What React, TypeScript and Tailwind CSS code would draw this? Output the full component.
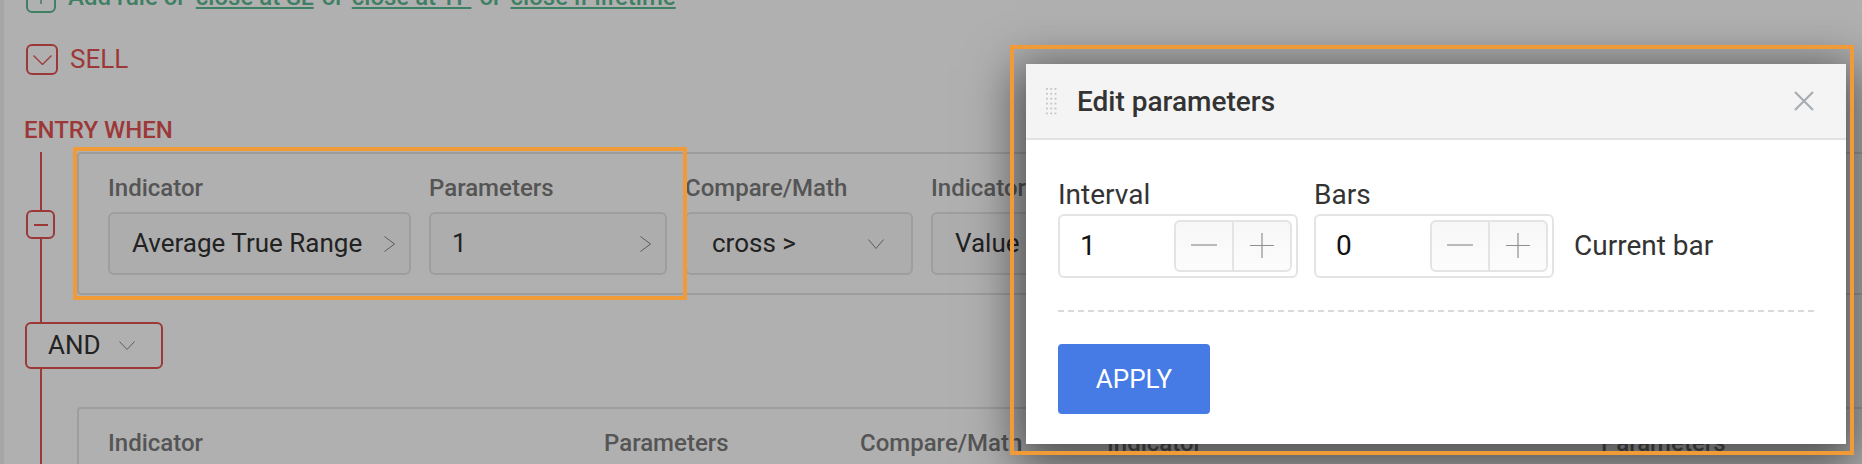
import React from "react";

const ChevronRight = () => (
  <svg width="11" height="16" viewBox="0 0 11 16" fill="none" stroke="#5c5c5c" strokeWidth="1" className="shrink-0">
    <path d="M0.5 0.5 L10.5 8 L0.5 15.5" />
  </svg>
);

const ChevronDown = ({ w = 16, h = 10, color = "#5c5c5c", sw = 1, className }: { w?: number; h?: number; color?: string; sw?: number; className?: string }) => (
  <svg width={w} height={h} viewBox={`0 0 ${w} ${h}`} fill="none" stroke={color} strokeWidth={sw} className={className}>
    <path d={`M0.5 0.5 L${w / 2} ${h - 0.5} L${w - 0.5} 0.5`} />
  </svg>
);

const Field = ({ w, text, icon, pl, pr = "pr-[14px]" }: { w: string; text: string; icon?: React.ReactNode; pl: string; pr?: string }) => (
  <div className={`${w} h-[63px] shrink-0 rounded-md border-2 border-[#9e9e9e] flex items-center justify-between ${pl} ${pr} text-[26px] text-[#222] bg-[#adadad]`}>
    <span className="whitespace-nowrap">{text}</span>
    {icon}
  </div>
);

const Label = ({ w, children }: { w: string; children: React.ReactNode }) => (
  <div className={`${w} shrink-0 text-[24px] font-medium text-[#555] leading-[26px] whitespace-nowrap`}>{children}</div>
);

const Stepper = ({ value }: { value: string }) => (
  <div className="w-[240px] h-[64px] rounded-md border-2 border-[#e4e4e4] flex items-center justify-between pl-[20px] pr-[4px]">
    <span className="text-[28px] text-[#111] leading-none">{value}</span>
    <div className="w-[118px] h-[52px] rounded-md border-2 border-[#e4e4e4] bg-gradient-to-b from-[#f7f7f7] to-[#fcfcfc] flex">
      <div className="flex-1 flex items-center justify-center border-r-2 border-[#e4e4e4]">
        <svg width="28" height="28" viewBox="0 0 28 28" stroke="#8f8f8f" strokeWidth="1.2"><path d="M1 13 H27" /></svg>
      </div>
      <div className="w-[56px] flex items-center justify-center">
        <svg width="26" height="26" viewBox="0 0 26 26" stroke="#8f8f8f" strokeWidth="1.2"><path d="M1 12.5 H25 M13 0 V25" /></svg>
      </div>
    </div>
  </div>
);

export default function App() {
  return (
    <div className="relative w-[1862px] h-[464px] overflow-hidden bg-[#b0b0b0] font-['Roboto',sans-serif]">
      <div className="flex flex-col h-[500px] border-l-[4px] border-[#a6a6a6] pl-[22px] -mt-[19px]">
        <div className="flex items-center gap-[12px] h-[32px]">
          <div className="w-[30px] h-[32px] rounded-md border-2 border-[#3f7f63] flex items-center justify-center text-[#3f7f63]">
            <svg width="14" height="14" viewBox="0 0 14 14" stroke="currentColor" strokeWidth="1.5"><path d="M0 7 H14 M7 0 V14" /></svg>
          </div>
          <div className="text-[24px] text-[#3f7f63] font-medium whitespace-nowrap flex gap-[8px]">
            <span>Add rule or</span>
            <span className="underline ml-[2px]">close at SL</span>
            <span>or</span>
            <span className="underline">close at TP</span>
            <span>or</span>
            <span className="underline ml-[1px]">close if lifetime</span>
          </div>
        </div>
        <div className="flex items-center gap-[12px] mt-[31px] h-[31px]">
          <div className="w-[32px] h-[31px] rounded-md border-2 border-[#9c3838] flex items-center justify-center">
            <ChevronDown w={19} h={10} color="#9c3838" sw={1.3} />
          </div>
          <span className="text-[26px] text-[#9c3838]">SELL</span>
        </div>
        <div className="mt-[41px] h-[29px] -ml-[2px] text-[24px] font-medium text-[#9c3838] leading-[29px]">ENTRY WHEN</div>
        <div className="relative flex flex-col">
          <div className="absolute left-[14px] top-[7px] bottom-[-200px] w-[2px] bg-[#9c3838]" />
          <div className="ml-[51px] w-[1800px] h-[143px] mt-[7px] rounded-sm border-2 border-[#9d9d9d] pl-[29px] pt-[21px]">
            <div className="flex">
              <Label w="w-[321px]">Indicator</Label>
              <Label w="w-[256px]">Parameters</Label>
              <Label w="w-[246px]">Compare/Math</Label>
              <Label w="w-[200px]">Indicator</Label>
            </div>
            <div className="flex gap-[18px] mt-[11px]">
              <Field w="w-[303px]" pl="pl-[22px]" text="Average True Range" icon={<ChevronRight />} />
              <Field w="w-[238px]" pl="pl-[21px]" text="1" icon={<ChevronRight />} />
              <Field w="w-[228px]" pl="pl-[25px]" pr="pr-[27px]" text="cross >" icon={<ChevronDown />} />
              <Field w="w-[300px]" pl="pl-[22px]" text="Value" />
            </div>
          </div>
          <div className="absolute left-0 top-[65px] w-[29px] h-[29px] rounded-md border-2 border-[#9c3838] bg-[#b0b0b0] flex items-center justify-center">
            <div className="w-[14px] h-[2px] bg-[#9c3838]" />
          </div>
          <div className="relative w-[138px] h-[47px] -ml-[1px] mt-[27px] rounded-md border-2 border-[#9c3838] bg-[#b0b0b0] flex items-center pl-[21px] gap-[18px] text-[26px] text-[#222]">
            <span>AND</span>
            <ChevronDown h={9} />
          </div>
          <div className="ml-[51px] w-[1800px] h-[100px] mt-[38px] rounded-sm border-2 border-[#9d9d9d] pl-[29px] pt-[21px]">
            <div className="flex">
              <Label w="w-[496px]">Indicator</Label>
              <Label w="w-[256px]">Parameters</Label>
              <Label w="w-[247px]">Compare/Math</Label>
              <Label w="w-[494px]">Indicator</Label>
              <Label w="w-[200px]">Parameters</Label>
            </div>
          </div>
        </div>
      </div>

      <div className="absolute left-[73px] top-[147px] w-[614px] h-[153px] border-4 border-[#f19a38]" />

      <div className="absolute left-[1026px] top-[64px] w-[820px] h-[380px] bg-white shadow-[0_12px_45px_10px_rgba(0,0,0,0.55)] flex flex-col">
        <div className="h-[76px] shrink-0 bg-[#f4f4f4] border-b-2 border-[#e2e2e2] flex items-center pl-[20px] pr-[32px]">
          <svg width="11" height="27" viewBox="0 0 11 27" fill="#c4c4c4" className="shrink-0">
            {[0, 1, 2, 3, 4, 5].map((r) =>
              [0, 1, 2].map((c) => <rect key={`${r}-${c}`} x={c * 4.3} y={r * 4.9} width="1.8" height="1.8" />)
            )}
          </svg>
          <span className="ml-[20px] mt-[2px] text-[28px] font-medium text-[#333] leading-none">Edit parameters</span>
          <svg width="20" height="20" viewBox="0 0 20 20" stroke="#a7adb3" strokeWidth="2.2" className="ml-auto">
            <path d="M1 1 L19 19 M19 1 L1 19" />
          </svg>
        </div>
        <div className="flex flex-col px-[32px] flex-1">
          <div className="flex gap-[16px] mt-[36px] text-[28px] text-[#333] leading-[38px]">
            <div className="w-[240px]">Interval</div>
            <div>Bars</div>
          </div>
          <div className="flex items-center">
            <Stepper value="1" />
            <div className="w-[16px]" />
            <Stepper value="0" />
            <span className="ml-[20px] text-[28px] text-[#333]">Current bar</span>
          </div>
          <div className="mt-[32px] border-t-2 border-dashed border-[#d8dbde] w-[756px]" />
          <div className="mt-[32px] w-[152px] h-[70px] rounded-[4px] bg-[#467be5] text-white text-[26px] flex items-center justify-center">APPLY</div>
        </div>
      </div>

      <div className="absolute left-[1010px] top-[45px] w-[844px] h-[410px] border-4 border-[#f19a38]" />
    </div>
  );
}
